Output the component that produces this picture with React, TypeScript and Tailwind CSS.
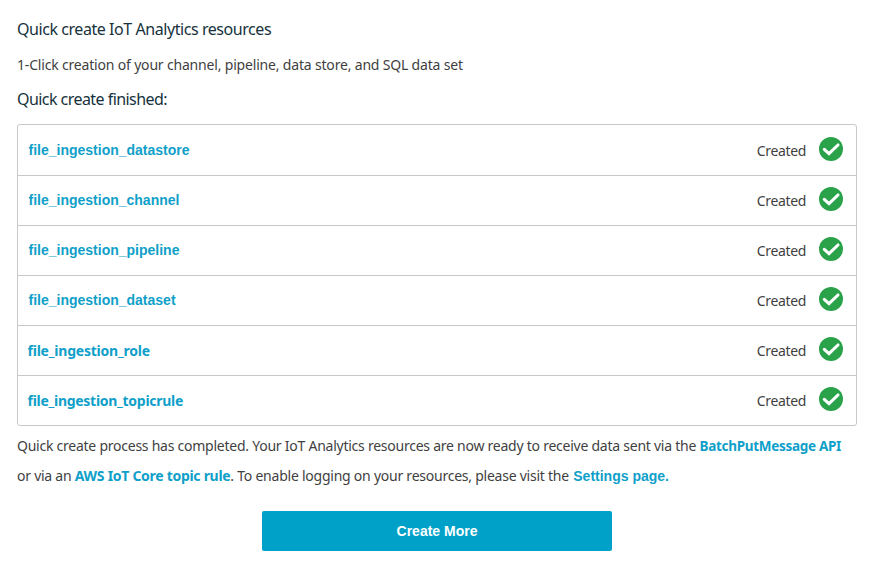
const resources = [
  { name: 'file_ingestion_datastore', style: "pl-[10.5px] font-['Liberation_Sans',sans-serif] text-[14px]" },
  { name: 'file_ingestion_channel', style: "pl-[10.5px] font-['Liberation_Sans',sans-serif] text-[14px]" },
  { name: 'file_ingestion_pipeline', style: "pl-[10.5px] font-['Liberation_Sans',sans-serif] text-[14px]" },
  { name: 'file_ingestion_dataset', style: "pl-[10.5px] font-['Liberation_Sans',sans-serif] text-[14px]" },
  { name: 'file_ingestion_role', style: 'pl-[9.5px] text-[14px] tracking-[-0.22px]' },
  { name: 'file_ingestion_topicrule', style: 'pl-[9.5px] text-[14px] tracking-[-0.28px]' },
];

function CheckBadge() {
  return (
    <svg width="24" height="24" viewBox="0 0 24 24" fill="none" aria-hidden="true">
      <circle cx="12" cy="12" r="12" fill="#2aa24a" />
      <path d="M5.3 12.3 10 16.6 19 8" stroke="#fff" strokeWidth="3.1" strokeLinecap="round" />
    </svg>
  );
}

export default function App() {
  return (
    <main className="h-[567px] w-[882px] overflow-hidden bg-white pt-[17px] pl-[17px] font-['Noto_Sans',sans-serif] text-[#3f3f3f]">
      <h1 className="h-[24px] text-[16px] leading-[24px] whitespace-nowrap text-[#16323c]">
        <span className="tracking-[-0.44px]">Quick create IoT Analytics resources</span>
      </h1>
      <p className="mt-[14px] h-[20px] text-[14px] leading-[20px] whitespace-nowrap">
        <span className="tracking-[-0.18px]">1-Click creation of your channel, pipeline, data store, and SQL data set</span>
      </p>
      <h2 className="mt-[12px] h-[24px] text-[16px] leading-[24px] whitespace-nowrap text-[#16323c]">
        <span className="tracking-[-0.55px]">Quick create finished:</span>
      </h2>
      <ul className="mt-[13px] h-[302px] w-[840px] rounded-[3px] border border-[#c8c8c8]">
        {resources.map((r) => (
          <li
            key={r.name}
            className="flex h-[50px] items-center justify-between border-b border-[#c8c8c8] pr-[13px] first:h-[51px] last:h-[49px] last:border-b-0"
          >
            <a className={`font-bold text-[#0f9fc9] ${r.style}`}>{r.name}</a>
            <div className="flex items-center gap-[13px]">
              <span className="text-[14px] tracking-[-0.36px]">Created</span>
              <span className="-mt-[3px]">
                <CheckBadge />
              </span>
            </div>
          </li>
        ))}
      </ul>
      <p className="mt-[5px] h-[60px] text-[14px] leading-[30px] whitespace-nowrap">
        <span className="tracking-[-0.245px]">Quick create process has completed. Your IoT Analytics resources are now ready to receive data sent via the </span>
        <a className="text-[13.5px] font-bold tracking-[-0.3px] text-[#0f9fc9]">BatchPutMessage API</a>
        <br />
        <span className="tracking-[-0.25px]">or via an </span>
        <a className="font-bold tracking-[-0.29px] text-[#0f9fc9]">AWS IoT Core topic rule</a>
        <span className="tracking-[-0.24px]">. To enable logging on your resources, please visit the </span>
        <a className="ml-px font-['Liberation_Sans',sans-serif] font-bold text-[#0f9fc9]">Settings page.</a>
      </p>
      <button className="mt-[20px] ml-[245px] block h-[40px] w-[350px] rounded-[2px] bg-[#00a1c9] font-['Liberation_Sans',sans-serif] text-[14px] font-bold text-white">
        Create More
      </button>
    </main>
  );
}
